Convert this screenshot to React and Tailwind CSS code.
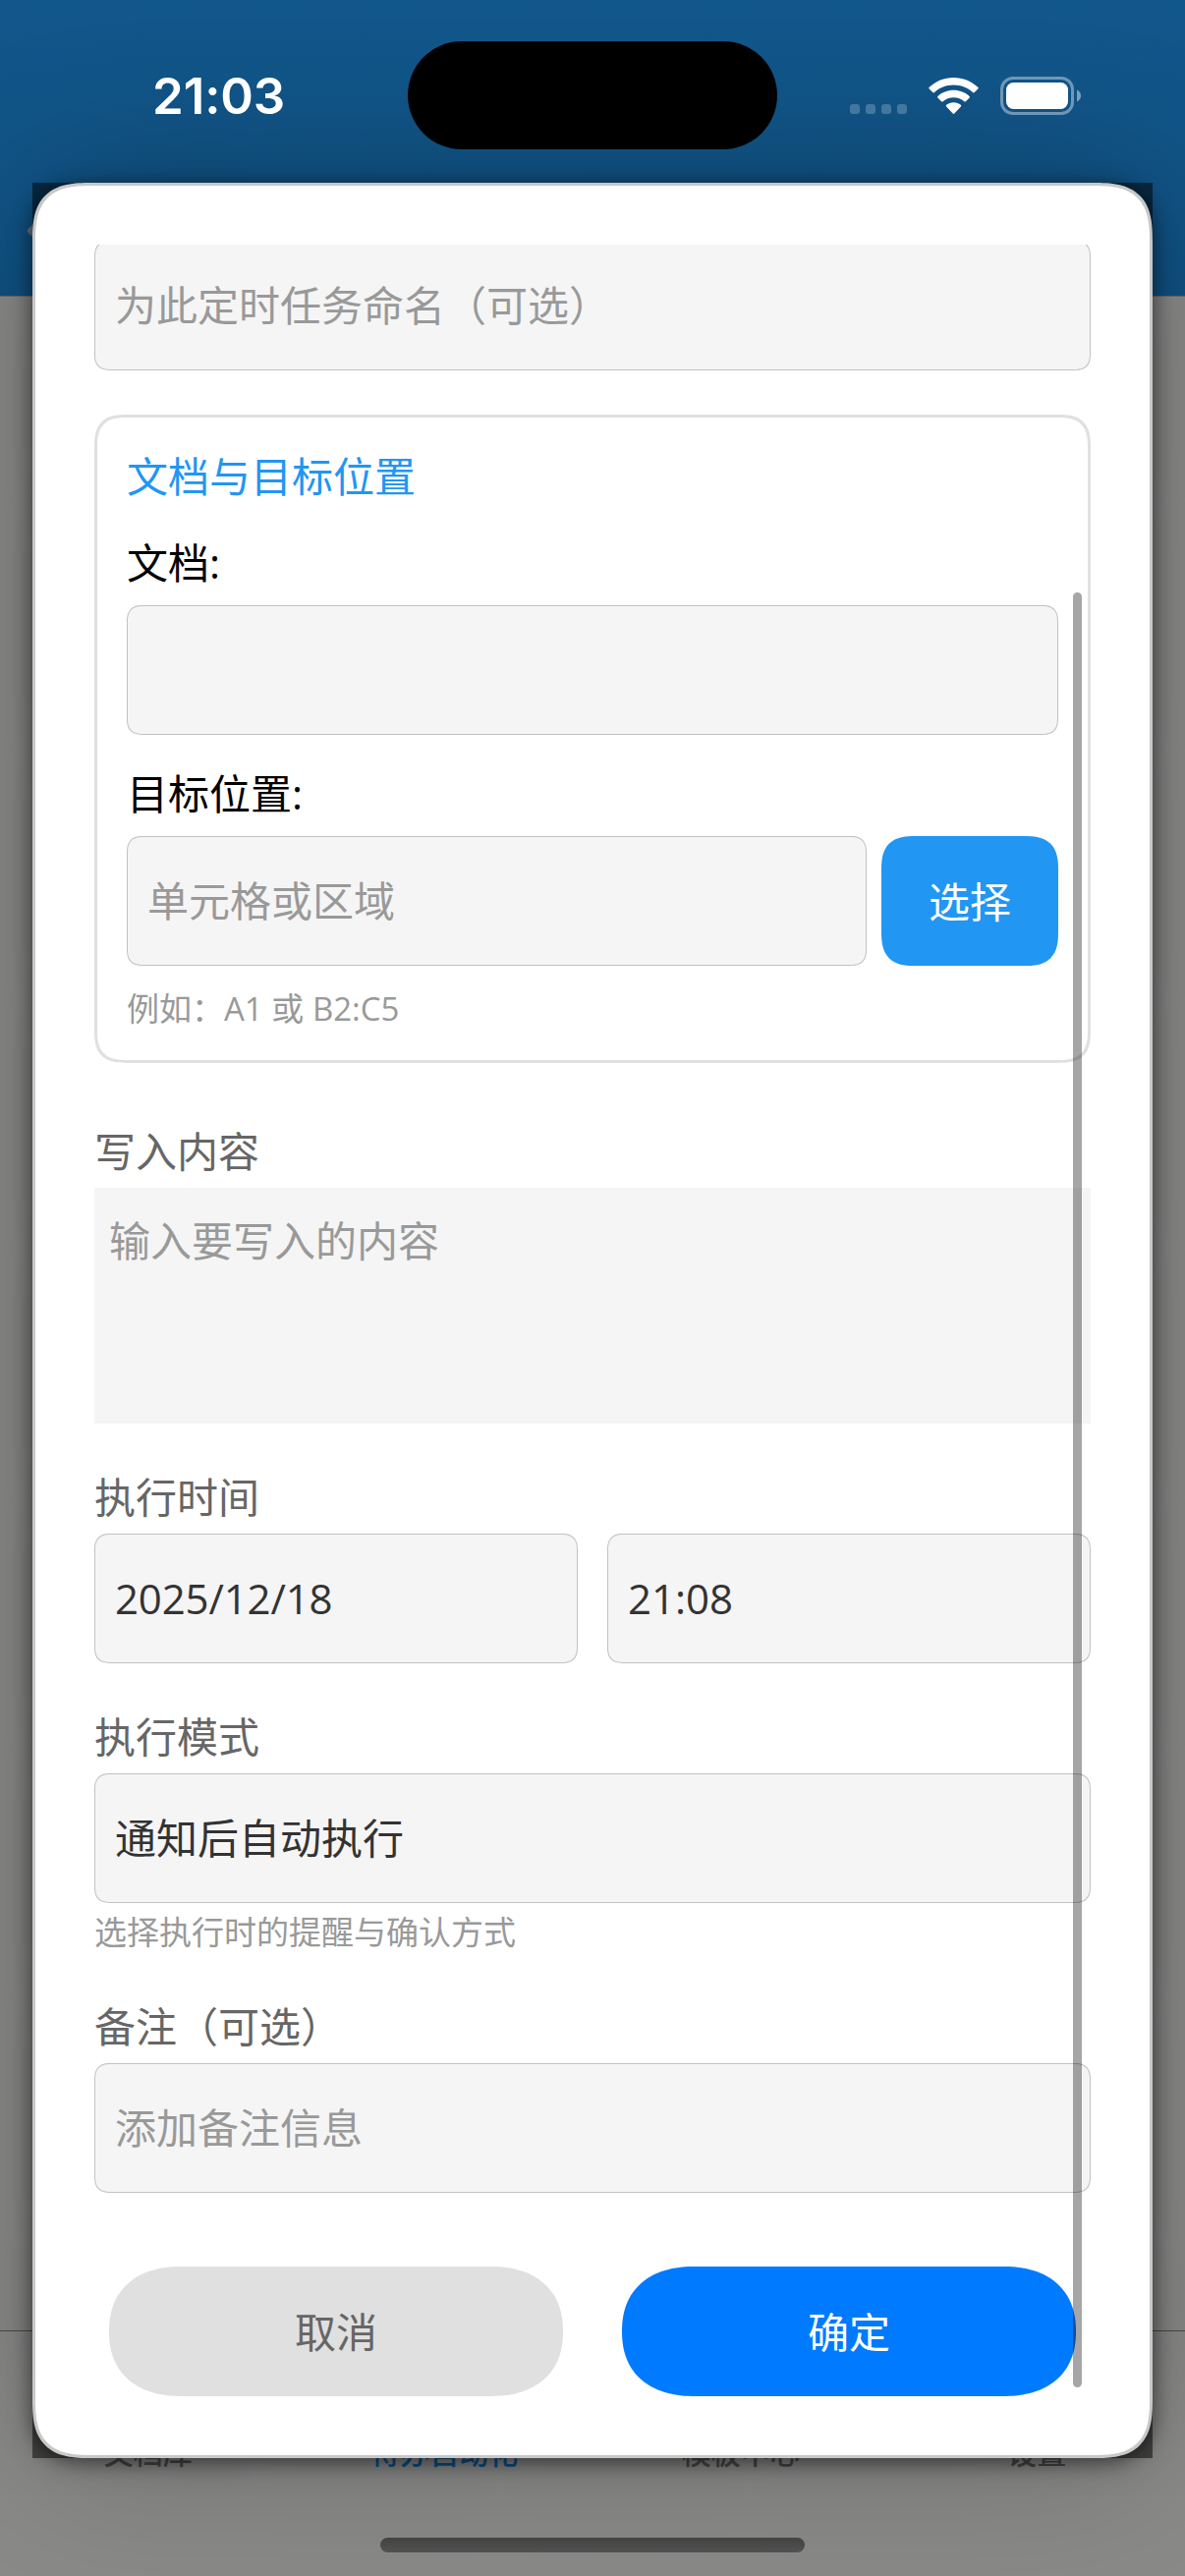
import React from "react";

const cjk = "font-['Open_Sans','Noto_Sans_CJK_SC',sans-serif]";

function Field({ children, className = "", placeholder = false }) {
  return (
    <div
      className={`flex h-[132px] items-center rounded-[17px] border border-[#c2c2c2] bg-[#f5f5f5] px-5 pb-px text-[42px] [corner-shape:superellipse(1.4)] ${
        placeholder ? "text-[#999999]" : "text-[#333333]"
      } ${className}`}
    >
      {children}
    </div>
  );
}

function Label({ children, className = "" }) {
  return <div className={`h-[58px] text-[42px] leading-[57px] ${className}`}>{children}</div>;
}

function Hint({ children, className = "" }) {
  return <div className={`h-[46px] text-[33px] leading-[46px] text-[#999999] ${className}`}>{children}</div>;
}

function StatusIcons() {
  return (
    <svg className="absolute left-[860px] top-[70px] h-[56px] w-[246px]" viewBox="860 70 246 56" fill="none">
      <g fill="#fff" fillOpacity="0.22">
        <rect x="865" y="106" width="10" height="10" rx="3" />
        <rect x="881" y="106" width="10" height="10" rx="3" />
        <rect x="897" y="106" width="10" height="10" rx="3" />
        <rect x="913" y="106" width="10" height="10" rx="3" />
      </g>
      <g fill="#fff">
        <path d="M970.5 79C961 79 952.3 82.7 945.7 88.8C945.2 89.2 945.2 90 945.7 90.5L949.3 94.1C949.8 94.6 950.5 94.6 951 94.1C956.2 89.3 963 86.6 970.5 86.6S984.8 89.3 990 94.1C990.5 94.6 991.2 94.6 991.7 94.1L995.3 90.5C995.8 90 995.8 89.2 995.3 88.8C988.7 82.7 980 79 970.5 79Z" />
        <path d="M970.5 91.7C964.3 91.7 958.7 94 954.4 97.9C953.9 98.4 953.9 99.1 954.4 99.6L958.1 103.2C958.5 103.7 959.2 103.7 959.7 103.2C962.6 100.7 966.4 99.2 970.5 99.2S978.4 100.7 981.3 103.2C981.8 103.7 982.5 103.7 982.9 103.2L986.6 99.6C987.1 99.1 987.1 98.4 986.6 97.9C982.3 94 976.7 91.7 970.5 91.7Z" />
        <path d="M970.5 104.3C967.7 104.3 965.2 105.2 963.2 106.8C962.7 107.2 962.7 107.9 963.1 108.4L969.7 115.5C970.2 116 970.8 116 971.3 115.5L977.9 108.4C978.3 107.9 978.3 107.2 977.8 106.8C975.8 105.2 973.3 104.3 970.5 104.3Z" />
      </g>
      <rect x="1019.5" y="79.5" width="72" height="36" rx="11.5" stroke="#fff" strokeOpacity="0.4" strokeWidth="3" />
      <rect x="1024" y="84" width="63" height="27" rx="7.5" fill="#fff" />
      <path d="M1096 91.5C1098.6 92.6 1100 94.9 1100 97.5S1098.6 102.4 1096 103.5Z" fill="#fff" fillOpacity="0.45" />
    </svg>
  );
}

function TabLabel({ children, className = "" }) {
  return <span className={`flex-1 text-center ${className}`}>{children}</span>;
}

function PageBehind() {
  return (
    <div className="flex h-full w-full flex-col">
      <div className="relative h-[301px] bg-gradient-to-b from-[#12578b] to-[#105284]">
        <svg className="absolute left-[27px] top-[214px] h-[44px] w-[26px]" viewBox="0 0 26 44" fill="none">
          <path d="M22 4L4 21L22 38" stroke="#6b7782" strokeWidth="6" strokeLinecap="round" strokeLinejoin="round" />
        </svg>
      </div>
      <div className="h-px bg-[#6b6b6b]" />
      <div className="flex-1 bg-[#8a8a89]" />
      <div className="h-[250px] border-t border-[#4c4c4c] bg-[#8a8a89] pt-[103px]">
        <div className="flex h-[42px] text-[30px] font-medium leading-[42px] text-[#484848]">
          <TabLabel>文档库</TabLabel>
          <TabLabel className="text-[#0a5288]">待办自动化</TabLabel>
          <TabLabel>模板中心</TabLabel>
          <TabLabel>设置</TabLabel>
        </div>
      </div>
    </div>
  );
}

export default function App() {
  return (
    <div className={`relative h-[2622px] w-[1206px] overflow-hidden ${cjk}`}>
      <PageBehind />

      {/* Dimmed corners and modal sheet */}
      <div className="absolute left-[33px] top-[186px] h-[2316px] w-[1140px] bg-black/50">
        <div className="h-full w-full rounded-[60px] border-[3px] border-[#c8c8c8] bg-white px-[60px] pt-[60px] shadow-[0_4px_22px_rgba(0,0,0,0.6),0_0_160px_rgba(0,0,0,0.26)] [corner-shape:superellipse(1.5)]">
          <div className="h-[2200px] overflow-hidden">
            <Field placeholder className="-mt-1">为此定时任务命名（可选）</Field>

            <section className="mt-[45px] h-[660px] rounded-[34px] border-[3px] border-[#e0e0e0] px-[30px] pt-[31px] [corner-shape:superellipse(1.5)]">
              <Label className="text-[#2196f3]">文档与目标位置</Label>
              <Label className="mt-[30px] text-black">文档:</Label>
              <Field className="mt-[14px]" />
              <Label className="mt-[31px] text-black">目标位置:</Label>
              <div className="mt-[14px] flex gap-[15px]">
                <Field placeholder className="flex-1">单元格或区域</Field>
                <button className="h-[132px] w-[180px] rounded-[35px] bg-[#2196f3] text-[42px] text-white [corner-shape:superellipse(1.45)]">选择</button>
              </div>
              <Hint className="mt-[21px]">例如：A1 或 B2:C5</Hint>
            </section>

            <Label className="mt-[61px] text-[#666666]">写入内容</Label>
            <div className="mt-2 h-[240px] bg-[#f5f5f5] px-[15px] pt-[25px] text-[42px] leading-[57px] text-[#999999]">
              输入要写入的内容
            </div>

            <Label className="mt-[46px] text-[#666666]">执行时间</Label>
            <div className="mt-2 flex gap-[30px]">
              <Field className="flex-1 tracking-[-0.15px]">2025/12/18</Field>
              <Field className="flex-1">21:08</Field>
            </div>

            <Label className="mt-[46px] text-[#666666]">执行模式</Label>
            <Field className="mt-2">通知后自动执行</Field>
            <Hint className="mt-[7px]">选择执行时的提醒与确认方式</Hint>

            <Label className="mt-[44px] text-[#666666]">备注（可选）</Label>
            <Field placeholder className="mt-2">添加备注信息</Field>

            <div className="mt-[75px] flex gap-[60px] px-[15px] text-[42px]">
              <button className="h-[132px] flex-1 bg-[#e0e0e0] text-[#666666] [border-radius:74px/66px] [corner-shape:superellipse(1.2)]">取消</button>
              <button className="h-[132px] flex-1 bg-[#007aff] text-white [border-radius:74px/66px] [corner-shape:superellipse(1.2)]">确定</button>
            </div>
          </div>
        </div>
      </div>

      {/* Scroll indicator */}
      <div className="absolute left-[1092px] top-[603px] h-[1827px] w-[9px] rounded-full bg-black/35" />

      {/* Status bar */}
      <div className="absolute left-[155px] top-[66px] font-['Inter'] text-[51px] font-semibold leading-[64px] tracking-[-0.1px] text-white">
        21:03
      </div>
      <div className="absolute left-[415px] top-[42px] h-[110px] w-[376px] rounded-full bg-black" />
      <StatusIcons />

      {/* Home indicator */}
      <div className="absolute left-[387px] top-[2583px] h-[15px] w-[432px] rounded-full bg-gradient-to-b from-[#424242] to-[#525252]" />
    </div>
  );
}
